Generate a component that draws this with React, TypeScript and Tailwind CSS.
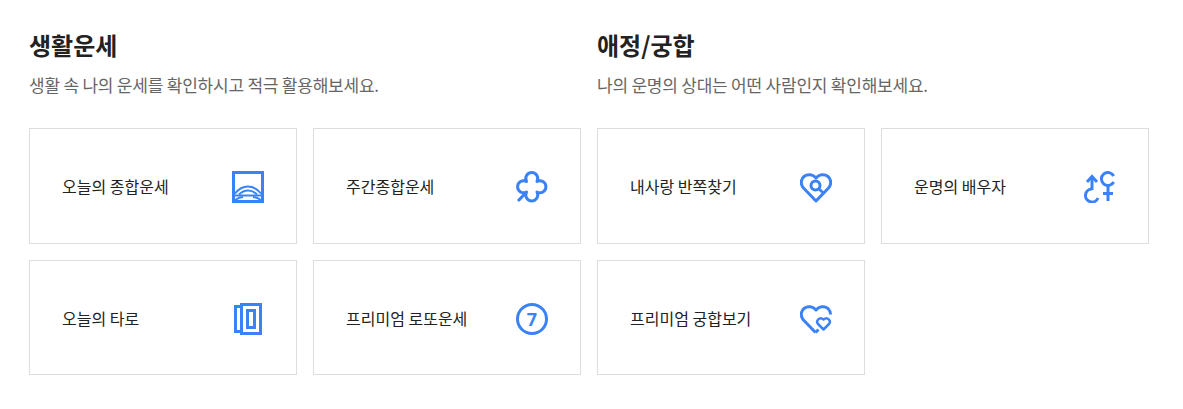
import type { ReactNode } from "react";

const heart = "M16 30L3.500 17C0 13 1 8 4 5.500 8 2.500 13 3.500 16 7 19 3.500 24 2.500 28 5.500 31 8 32 13 28.500 17Z";

const icons: Record<string, ReactNode> = {
  today: (
    <>
      <rect x="1.500" y="1.500" width="29" height="29" strokeWidth="3" />
      <g strokeWidth="2">
        <path d="M3 22.500C7 17.500 11 15.500 16 15.500S25 17.500 29 22.500" />
        <path d="M7 23.500C10 20.500 13 19.500 16 19.500S22 20.500 25 23.500" />
        <path d="M2 24.500H30" />
        <path d="M3 29C6 27 9 26 11 26M29 29C26 27 23 26 21 26" />
      </g>
    </>
  ),
  clover: (
    <>
      <path d="M10.500 10.500A6 6 0 1 1 21 10.500 6 6 0 1 1 21 21 6 6 0 1 1 10.500 21 6 6 0 1 1 10.500 10.500Z" strokeLinejoin="round" />
      <path d="M10.500 21L2 30" />
    </>
  ),
  heartSearch: (
    <>
      <path d={heart} strokeLinejoin="round" />
      <circle cx="15.500" cy="14.500" r="4.500" />
      <path d="M19 18L24.500 23" />
    </>
  ),
  gender: (
    <>
      <path d="M3 11L8 5.500 13 11" />
      <path d="M8 5.500V19" />
      <path d="M8 18A6.500 6.500 0 1 0 14 27" />
      <path d="M29.700 5A6.500 6.500 0 1 0 29.700 11" />
      <path d="M24 14.500V30M19 22.500H29" />
    </>
  ),
  tarot: (
    <>
      <rect x="9.500" y="1.500" width="19" height="29" />
      <rect x="15.500" y="7.500" width="7" height="17" />
      <path d="M8 3.500H3.500V28.500H8" />
    </>
  ),
  lotto: (
    <>
      <circle cx="16" cy="16" r="14.500" />
      <text x="16" y="22.500" textAnchor="middle" fontSize="18" fontWeight="700" fill="#3b82f6" stroke="none" fontFamily="'Noto Sans', sans-serif">
        7
      </text>
    </>
  ),
  hearts: (
    <>
      <path d="M15.500 29.500L3.500 17C0 13 1 8 4 5.500 8 2.500 13 3.500 16 7 19 3.500 24 2.500 28 5.500 29.500 7 30.500 9 30.500 11.500" strokeLinejoin="round" />
      <path d="M23.500 26.500L18 21C15.500 18 19.500 13 23.500 16.500 27.500 13 31.500 18 29 21Z" strokeLinejoin="round" strokeWidth="2.500" />
      <path d="M15.500 29.500L18.500 26.500" />
    </>
  ),
};

function Card({ title, icon }: { title: string; icon: string }) {
  return (
    <div className="flex items-center justify-between border border-[#dddddd] bg-white px-8">
      <span className="text-base text-[#222222]">{title}</span>
      <svg width="32" height="32" viewBox="0 0 32 32" fill="none" stroke="#3b82f6" strokeWidth="3" className="mt-0.5 shrink-0">
        {icons[icon]}
      </svg>
    </div>
  );
}

function Section({ title, desc, items }: { title: string; desc: string; items: [string, string][] }) {
  return (
    <section className="w-[552px]">
      <h2 className="text-2xl leading-[32px] font-bold text-[#222222]">{title}</h2>
      <p className="mt-[12px] text-[17px] leading-[24px] tracking-[-0.22px] text-[#666666]">{desc}</p>
      <div className="mt-[31px] grid grid-cols-[268px_268px] grid-rows-[116px_115px] gap-4">
        {items.map(([label, icon]) => (
          <Card key={label} title={label} icon={icon} />
        ))}
      </div>
    </section>
  );
}

export default function App() {
  return (
    <div className="flex h-[409px] gap-4 bg-white pt-[29px] pl-[29px] font-['Noto_Sans_CJK_KR','Noto_Sans',sans-serif]">
      <Section
        title="생활운세"
        desc="생활 속 나의 운세를 확인하시고 적극 활용해보세요."
        items={[
          ["오늘의 종합운세", "today"],
          ["주간종합운세", "clover"],
          ["오늘의 타로", "tarot"],
          ["프리미엄 로또운세", "lotto"],
        ]}
      />
      <Section
        title="애정/궁합"
        desc="나의 운명의 상대는 어떤 사람인지 확인해보세요."
        items={[
          ["내사랑 반쪽찾기", "heartSearch"],
          ["운명의 배우자", "gender"],
          ["프리미엄 궁합보기", "hearts"],
        ]}
      />
    </div>
  );
}
